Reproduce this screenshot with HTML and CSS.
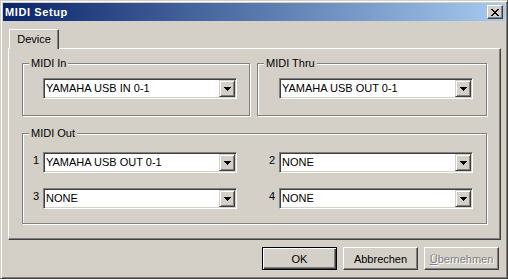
FILE: index.html
```html
<html charset="utf-8">
  <head>
    <title>MIDI Setup</title>
    <link rel="stylesheet" href="styles.css">
  </head>
  <body>
    <div class="window">
      <div class="titlebar">
        <span class="title">MIDI Setup</span>
        <button class="close">
          <svg width="8" height="7" viewBox="0 0 8 7" shape-rendering="crispEdges">
            <path d="M0 0h2v1H0zM6 0h2v1H6zM1 1h2v1H1zM5 1h2v1H5zM2 2h4v1H2zM3 3h2v1H3zM2 4h4v1H2zM1 5h2v1H1zM5 5h2v1H5zM0 6h2v1H0zM6 6h2v1H6z" fill="#000"/>
          </svg>
        </button>
      </div>
      <div class="content">
        <div class="tabs">
          <div class="tab">Device</div>
        </div>
        <div class="panel">
          <div class="group-row">
            <fieldset class="group">
              <legend>MIDI In</legend>
              <div class="combo">
                <span class="combo-value">YAMAHA USB IN 0-1</span>
                <span class="combo-btn"><svg width="7" height="4" viewBox="0 0 7 4" shape-rendering="crispEdges"><path d="M0 0h7v1H0zM1 1h5v1H1zM2 2h3v1H2zM3 3h1v1H3z"/></svg></span>
              </div>
            </fieldset>
            <fieldset class="group thru">
              <legend>MIDI Thru</legend>
              <div class="combo">
                <span class="combo-value">YAMAHA USB OUT 0-1</span>
                <span class="combo-btn"><svg width="7" height="4" viewBox="0 0 7 4" shape-rendering="crispEdges"><path d="M0 0h7v1H0zM1 1h5v1H1zM2 2h3v1H2zM3 3h1v1H3z"/></svg></span>
              </div>
            </fieldset>
          </div>
          <fieldset class="group out">
            <legend>MIDI Out</legend>
            <div class="out-grid">
              <span class="port-num">1</span>
              <div class="combo">
                <span class="combo-value">YAMAHA USB OUT 0-1</span>
                <span class="combo-btn"><svg width="7" height="4" viewBox="0 0 7 4" shape-rendering="crispEdges"><path d="M0 0h7v1H0zM1 1h5v1H1zM2 2h3v1H2zM3 3h1v1H3z"/></svg></span>
              </div>
              <span class="port-num">2</span>
              <div class="combo">
                <span class="combo-value">NONE</span>
                <span class="combo-btn"><svg width="7" height="4" viewBox="0 0 7 4" shape-rendering="crispEdges"><path d="M0 0h7v1H0zM1 1h5v1H1zM2 2h3v1H2zM3 3h1v1H3z"/></svg></span>
              </div>
              <span class="port-num">3</span>
              <div class="combo">
                <span class="combo-value">NONE</span>
                <span class="combo-btn"><svg width="7" height="4" viewBox="0 0 7 4" shape-rendering="crispEdges"><path d="M0 0h7v1H0zM1 1h5v1H1zM2 2h3v1H2zM3 3h1v1H3z"/></svg></span>
              </div>
              <span class="port-num">4</span>
              <div class="combo">
                <span class="combo-value">NONE</span>
                <span class="combo-btn"><svg width="7" height="4" viewBox="0 0 7 4" shape-rendering="crispEdges"><path d="M0 0h7v1H0zM1 1h5v1H1zM2 2h3v1H2zM3 3h1v1H3z"/></svg></span>
              </div>
            </div>
          </fieldset>
        </div>
        <div class="buttons">
          <button class="btn default">OK</button>
          <button class="btn">Abbrechen</button>
          <button class="btn disabled"><u>Ü</u>bernehmen</button>
        </div>
      </div>
    </div>
  </body>
</html>
```

FILE: styles.css
```css
* { box-sizing: border-box; }
body {
  margin: 0;
  font: 11px "Liberation Sans", Arial, sans-serif;
  color: #000;
}

.window {
  width: 508px;
  height: 279px;
  background: #d4d0c8;
  border: 1px solid;
  border-color: #d4d0c8 #404040 #404040 #d4d0c8;
  box-shadow: inset 1px 1px #fff, inset -1px -1px #808080;
  padding: 2px;
}

.titlebar {
  height: 18px;
  display: flex;
  align-items: center;
  justify-content: space-between;
  padding: 0 2px;
  background: linear-gradient(to right, #0a246a, #a6caf0);
}
.title {
  color: #fff;
  font-weight: bold;
  letter-spacing: 0.6px;
  line-height: 18px;
}
.close {
  width: 16px;
  height: 14px;
  padding: 0;
  display: flex;
  align-items: center;
  justify-content: center;
  background: #d4d0c8;
  border: 1px solid;
  border-color: #fff #404040 #404040 #fff;
  box-shadow: inset -1px -1px #808080;
}

.content { padding: 0 4px 0 5px; }

/* tab strip */
.tabs { display: flex; margin-top: 8px; padding-left: 1px; }
.tab {
  position: relative; /* sits over the panel's top edge */
  width: 50px;
  height: 20px;
  margin-bottom: -1px;
  text-align: center;
  line-height: 19px;
  background: #d4d0c8;
  border: 1px solid;
  border-bottom: none;
  border-color: #fff #404040 #404040 #fff;
  box-shadow: inset -1px 0 #808080;
}

.panel {
  height: 192px;
  padding: 8px 13px 0 13px;
  border: 1px solid;
  border-color: #fff #404040 #404040 #fff;
  box-shadow: inset -1px -1px #808080;
}

/* group boxes */
.group-row {
  display: grid;
  grid-template-columns: 228px 230px;
  column-gap: 7px;
}
fieldset.group {
  margin: 0;
  min-width: 0;
  padding: 8px 0 16px 0;
  border: 1px solid #808080;
  box-shadow: 1px 1px #fff, inset 1px 1px #fff;
}
fieldset.group > .combo { margin-left: 20px; }
fieldset.group.thru > .combo { margin-left: 21px; }
fieldset.group legend {
  margin-left: 6px;
  padding: 0 2px;
  line-height: 13px;
  background: #d4d0c8;
}
fieldset.group.out {
  margin-top: 11px;
  padding: 12px 0 14px 0;
}

.out-grid {
  display: grid;
  grid-template-columns: 20px 194px 42px 194px;
  row-gap: 15px;
  align-items: start;
}
.port-num {
  justify-self: end;
  padding: 2px 4px 0 0;
  line-height: 13px;
}

/* combo boxes */
.combo {
  width: 194px;
  height: 21px;
  display: flex;
  padding: 1px;
  background: #fff;
  border: 1px solid;
  border-color: #808080 #fff #fff #808080;
  box-shadow: inset 1px 1px #404040, inset -1px -1px #d4d0c8;
}
.combo-value {
  flex: 1;
  padding-left: 1px;
  line-height: 17px;
  white-space: nowrap;
}
.combo-btn {
  width: 16px;
  height: 17px;
  display: flex;
  align-items: center;
  justify-content: center;
  background: #d4d0c8;
  border: 1px solid;
  border-color: #d4d0c8 #404040 #404040 #d4d0c8;
  box-shadow: inset 1px 1px #fff, inset -1px -1px #808080;
}

/* dialog buttons */
.buttons {
  display: flex;
  justify-content: flex-end;
  gap: 6px;
  margin: 7px 2px 0 0;
}
.btn {
  width: 75px;
  height: 23px;
  padding: 0;
  font: inherit;
  color: #000;
  background: #d4d0c8;
  border: 1px solid;
  border-color: #fff #404040 #404040 #fff;
  box-shadow: inset -1px -1px #808080;
}
.btn.default {
  border-color: #000;
  box-shadow: inset 1px 1px #fff, inset -1px -1px #404040, inset -2px -2px #808080;
}
.btn.disabled {
  color: #808080;
  text-shadow: 1px 1px #fff;
}
```
